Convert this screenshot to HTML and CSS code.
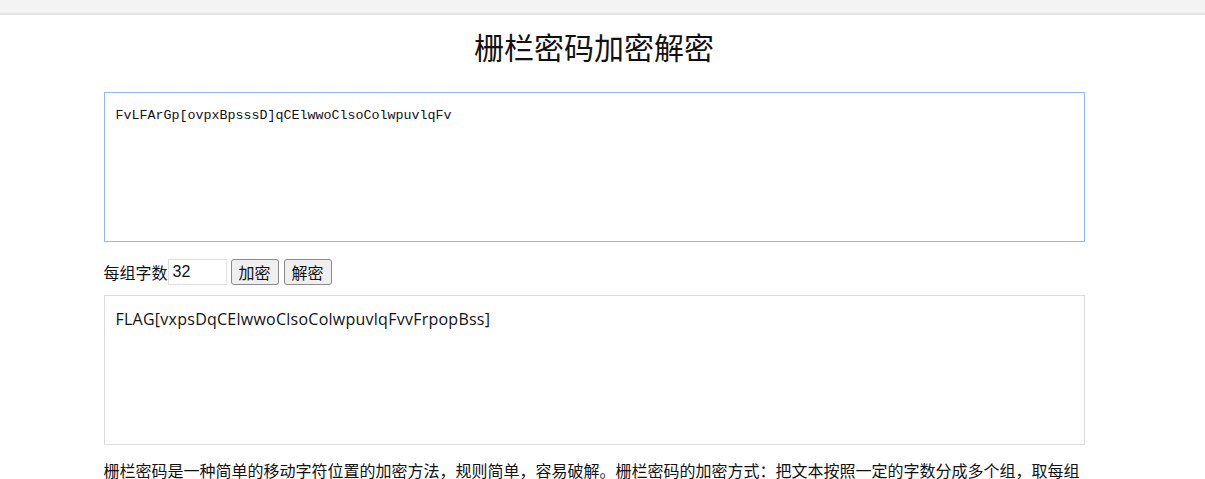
FILE: index.html
```html
<!DOCTYPE html>
<html lang="zh-CN">
<head>
<meta charset="utf-8">
<title>栅栏密码加密解密</title>
<link rel="stylesheet" href="styles.css">
</head>
<body>
<div class="topbar"></div>
<div class="page">
  <main class="main">
    <h1 class="title">栅栏密码加密解密</h1>
    <textarea class="box box-input">FvLFArGp[ovpxBpsssD]qCElwwoClsoColwpuvlqFv</textarea>
    <div class="controls">
      <label class="label" for="n">每组字数</label>
      <input class="num" id="n" type="text" value="32">
      <button class="btn" type="button">加密</button>
      <button class="btn" type="button">解密</button>
    </div>
    <textarea class="box box-output">FLAG[vxpsDqCElwwoClsoColwpuvlqFvvFrpopBss]</textarea>
    <p class="desc">栅栏密码是一种简单的移动字符位置的加密方法，规则简单，容易破解。栅栏密码的加密方式：把文本按照一定的字数分成多个组，取每组第一个字连起来得到密文1，再取每组第二个字连起来得到密文2……最后把得到的密文连起来就是最终密文。</p>
  </main>
</div>
</body>
</html>
```

FILE: styles.css
```css
html, body {
  margin: 0;
  padding: 0;
  background: #fff;
}
body {
  font-family: "Noto Sans CJK SC", "Noto Sans", sans-serif;
  color: #111;
}
.topbar {
  height: 13px;
  background: #f3f3f3;
  border-bottom: 2px solid #e2e2e2;
}
.page {
  width: 1188px;
}
.main {
  width: 981px;
  margin: 0 auto;
}
.title {
  margin: 11px 0 26px;
  font-size: 30px;
  line-height: 40px;
  font-weight: 400;
  text-align: center;
  color: #111;
}
.box {
  display: block;
  box-sizing: border-box;
  width: 981px;
  height: 150px;
  margin: 0;
  padding: 10px 11px;
  resize: none;
  outline: none;
  background: #fff;
  color: #111;
}
.box-input {
  border: 1px solid #8fb8f5;
  padding-top: 12px;
  font-family: "Liberation Mono", monospace;
  font-size: 13.333px;
  line-height: 22px;
}
.box-output {
  border: 1px solid #dcdcdc;
  font-family: "Open Sans", "Noto Sans CJK SC", sans-serif;
  font-size: 16px;
  line-height: 26px;
  letter-spacing: 0.25px;
}
.controls {
  display: flex;
  align-items: center;
  gap: 4px;
  margin: 17px 0 10px;
  height: 26px;
}
.label {
  font-size: 16px;
  margin-right: -4px;
}
.num {
  box-sizing: border-box;
  width: 59px;
  height: 26px;
  padding: 0 4px;
  border: 1px solid #e0e0e0;
  font-family: "Liberation Sans", sans-serif;
  font-size: 16px;
  color: #111;
  outline: none;
}
.btn {
  box-sizing: border-box;
  width: 48px;
  height: 26px;
  padding: 0;
  border: 1px solid #8a8a8a;
  border-radius: 3px;
  background: #efefef;
  font-family: "Noto Sans CJK SC", sans-serif;
  font-size: 16px;
  color: #111;
}
.btn + .btn {
  margin-left: 1px;
}
.desc {
  margin: 12px 0 0;
  font-size: 16px;
  line-height: 26px;
  color: #111;
}
```
